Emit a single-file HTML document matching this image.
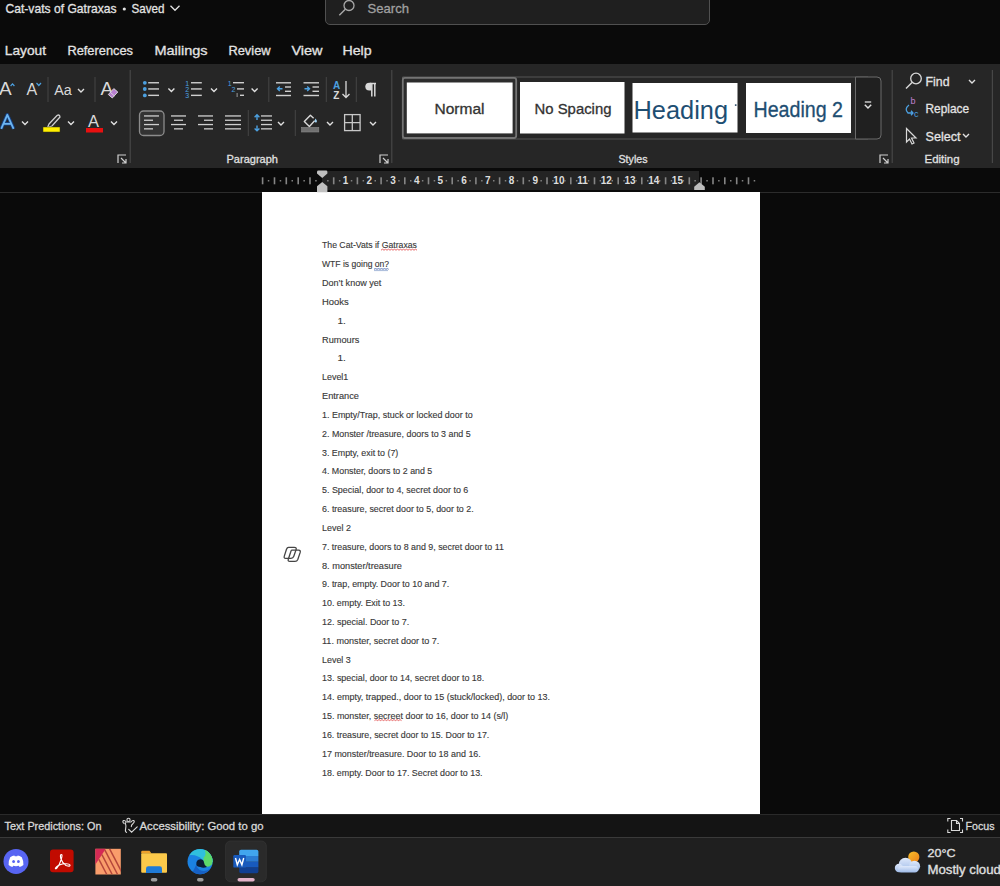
<!DOCTYPE html>
<html><head><meta charset="utf-8">
<style>
*{margin:0;padding:0;box-sizing:border-box}
html,body{width:1000px;height:886px;overflow:hidden;background:#0a0a0a;font-family:"Liberation Sans",sans-serif;position:relative}
#ribbon{position:absolute;left:0;top:64px;width:1000px;height:104px;background:#262626}
#ruler{position:absolute;left:322px;top:170.8px;width:377px;height:19.6px;background:#242424}
#page{position:absolute;left:262px;top:192.3px;width:497.6px;height:621.4px;background:#fff}
#status{position:absolute;left:0;top:813.5px;width:1000px;height:23.5px;background:#141414;border-top:1px solid #2a2a2a}
#task{position:absolute;left:0;top:837px;width:1000px;height:49px;background:#1f1f1f;border-top:1px solid #3a3a3a}
.ov{position:absolute;left:0;top:0}
</style></head><body>
<div id="search" style="position:absolute;left:325px;top:-5.4px;width:385px;height:30px;border:1px solid #505050;border-radius:5px;background:#1f1f1f"></div>
<div id="ribbon"></div>
<div id="ruler"></div>
<div style="position:absolute;left:0;top:191.5px;width:1000px;height:1px;background:#2c2c2c"></div>
<div id="page"></div>
<div id="status"></div>
<div id="task"></div>
<svg class="ov" width="1000" height="886" viewBox="0 0 1000 886" font-family="Liberation Sans, sans-serif">
<text x="-1" y="95" font-size="19" fill="#d9d9d9">A</text>
<path d="M10.6,86 L12.5,83.8 L14.4,86" fill="none" stroke="#4ca0e0" stroke-width="1.2"/>
<text x="26.5" y="95" font-size="16" fill="#d9d9d9">A</text>
<path d="M36.5,83 L38.8,85.5 L41,83" fill="none" stroke="#4ca0e0" stroke-width="1.2"/>
<rect x="47.5" y="77" width="1" height="25" fill="#454545"/>
<text x="54.3" y="95" font-size="15.5" fill="#d9d9d9" textLength="17.5" lengthAdjust="spacingAndGlyphs">Aa</text>
<path d="M78,88.9 L81,91.9 L84,88.9" fill="none" stroke="#e0e0e0" stroke-width="1.4"/>
<rect x="94.5" y="77" width="1" height="25" fill="#454545"/>
<text x="100.5" y="95" font-size="19" fill="#d9d9d9">A</text>
<path d="M108.3,94.5 L113.8,88.6 L117.8,92 L112.3,98 Z" fill="#b77fd0" stroke="#e0e0e0" stroke-width="0.9"/><path d="M110.3,92.3 L114.5,96" stroke="#e0e0e0" stroke-width="0.8"/>
<path d="M1.2,128.8 L7.3,114.8 L13.6,128.8 M3.6,123.8 L11.2,123.8" fill="none" stroke="#163f80" stroke-width="3.6" stroke-linejoin="round"/><path d="M1.2,128.8 L7.3,114.8 L13.6,128.8 M3.6,123.8 L11.2,123.8" fill="none" stroke="#6cb5f0" stroke-width="1.8" stroke-linejoin="round"/>
<path d="M22,121.4 L25,124.4 L28,121.4" fill="none" stroke="#e0e0e0" stroke-width="1.4"/>
<path d="M49,124 L57,115.5 Q59.5,114 60,117 L52,126 L47.5,127.5 Z" fill="none" stroke="#cfcfcf" stroke-width="1.3"/>
<rect x="43" y="127" width="17" height="5" fill="#ffef00" stroke="#3a3a10" stroke-width="0.5"/>
<path d="M68,121.4 L71,124.4 L74,121.4" fill="none" stroke="#e0e0e0" stroke-width="1.4"/>
<text x="88" y="127" font-size="16.5" fill="#d9d9d9">A</text>
<rect x="86" y="128" width="17" height="4.5" fill="#e81010"/>
<path d="M111,121.4 L114,124.4 L117,121.4" fill="none" stroke="#e0e0e0" stroke-width="1.4"/>
<path d="M118,163 L118,155 L126,155" fill="none" stroke="#d0d0d0" stroke-width="1.2"/><path d="M121,158 L126,163 M126,159 L126,163 L122,163" fill="none" stroke="#d0d0d0" stroke-width="1.2"/>
<circle cx="144.8" cy="82.8" r="1.9" fill="#4ca0e0"/>
<rect x="148.2" y="82.05" width="10.8" height="1.4" fill="#cfcfcf"/>
<circle cx="144.8" cy="89" r="1.9" fill="#4ca0e0"/>
<rect x="148.2" y="88.25" width="10.8" height="1.4" fill="#cfcfcf"/>
<circle cx="144.8" cy="95.4" r="1.9" fill="#4ca0e0"/>
<rect x="148.2" y="94.65" width="10.8" height="1.4" fill="#cfcfcf"/>
<path d="M168.4,88.4 L171.4,91.4 L174.4,88.4" fill="none" stroke="#e0e0e0" stroke-width="1.4"/>
<text x="185.3" y="85.6" font-size="7" fill="#4ca0e0">1</text>
<rect x="191" y="82.05" width="10.8" height="1.4" fill="#cfcfcf"/>
<text x="185.3" y="91.8" font-size="7" fill="#4ca0e0">2</text>
<rect x="191" y="88.25" width="10.8" height="1.4" fill="#cfcfcf"/>
<text x="185.3" y="98.2" font-size="7" fill="#4ca0e0">3</text>
<rect x="191" y="94.65" width="10.8" height="1.4" fill="#cfcfcf"/>
<path d="M211,88.4 L214,91.4 L217,88.4" fill="none" stroke="#e0e0e0" stroke-width="1.4"/>
<text x="227.8" y="85.5" font-size="7" fill="#4ca0e0">1</text>
<text x="231.5" y="91.8" font-size="7" fill="#4ca0e0">2</text>
<rect x="236.6" y="93" width="1" height="4" fill="#9a9a9a"/>
<rect x="233" y="82" width="11" height="1.4" fill="#cfcfcf"/>
<rect x="237" y="88.2" width="7" height="1.4" fill="#cfcfcf"/>
<rect x="240" y="94.6" width="4" height="1.4" fill="#cfcfcf"/>
<path d="M251.6,88.4 L254.6,91.4 L257.6,88.4" fill="none" stroke="#e0e0e0" stroke-width="1.4"/>
<rect x="268.3" y="77" width="1" height="25" fill="#454545"/>
<rect x="276" y="82.1" width="15" height="1.4" fill="#cfcfcf"/>
<rect x="285" y="86.3" width="6" height="1.4" fill="#cfcfcf"/>
<rect x="285" y="90.6" width="6" height="1.4" fill="#cfcfcf"/>
<rect x="276" y="94.8" width="15" height="1.4" fill="#cfcfcf"/>
<path d="M282.5,88.7 L277.5,88.7 M279.8,86.5 L277.5,88.7 L279.8,90.9" fill="none" stroke="#4ca0e0" stroke-width="1.4"/>
<rect x="303.5" y="82.1" width="15.5" height="1.4" fill="#cfcfcf"/>
<rect x="312.5" y="86.3" width="6.5" height="1.4" fill="#cfcfcf"/>
<rect x="312.5" y="90.6" width="6.5" height="1.4" fill="#cfcfcf"/>
<rect x="303.5" y="94.8" width="15.5" height="1.4" fill="#cfcfcf"/>
<path d="M304.5,88.7 L309.5,88.7 M307.2,86.5 L309.5,88.7 L307.2,90.9" fill="none" stroke="#4ca0e0" stroke-width="1.4"/>
<rect x="325.8" y="77" width="1" height="25" fill="#454545"/>
<text x="333" y="88.5" font-size="10" fill="#4ca0e0" font-weight="bold">A</text>
<text x="333.2" y="98.5" font-size="10" fill="#d9d9d9" font-weight="bold">Z</text>
<path d="M346,81 L346,97.5 M342.5,94 L346,97.5 L349.5,94" fill="none" stroke="#d9d9d9" stroke-width="1.3"/>
<rect x="355.8" y="77" width="1" height="25" fill="#454545"/>
<path d="M370.2,83.4 L376,83.4 M371.8,83.4 L371.8,96.4 M374.8,83.4 L374.8,96.4" fill="none" stroke="#d9d9d9" stroke-width="1.5"/>
<path d="M371.2,82.7 L369.3,82.7 A4,3.9 0 0 0 369.3,90.5 L371.2,90.5 Z" fill="#d9d9d9"/>
<rect x="139.5" y="111" width="24.5" height="24.5" rx="4" fill="#333333" stroke="#8c8c8c" stroke-width="1.3"/>
<rect x="144" y="115.3" width="15" height="1.3" fill="#cfcfcf"/>
<rect x="144" y="119.6" width="9" height="1.3" fill="#cfcfcf"/>
<rect x="144" y="123.89999999999999" width="15" height="1.3" fill="#cfcfcf"/>
<rect x="144" y="128.20000000000002" width="9" height="1.3" fill="#cfcfcf"/>
<rect x="171" y="115.3" width="15" height="1.3" fill="#cfcfcf"/>
<rect x="174" y="119.6" width="9" height="1.3" fill="#cfcfcf"/>
<rect x="171" y="123.89999999999999" width="15" height="1.3" fill="#cfcfcf"/>
<rect x="174" y="128.20000000000002" width="9" height="1.3" fill="#cfcfcf"/>
<rect x="198" y="115.3" width="15" height="1.3" fill="#cfcfcf"/>
<rect x="204" y="119.6" width="9" height="1.3" fill="#cfcfcf"/>
<rect x="198" y="123.89999999999999" width="15" height="1.3" fill="#cfcfcf"/>
<rect x="204" y="128.20000000000002" width="9" height="1.3" fill="#cfcfcf"/>
<rect x="225" y="115.3" width="16" height="1.3" fill="#cfcfcf"/>
<rect x="225" y="119.6" width="16" height="1.3" fill="#cfcfcf"/>
<rect x="225" y="123.89999999999999" width="16" height="1.3" fill="#cfcfcf"/>
<rect x="225" y="128.20000000000002" width="16" height="1.3" fill="#cfcfcf"/>
<rect x="247.8" y="110" width="1" height="26" fill="#454545"/>
<rect x="261" y="115.3" width="11" height="1.3" fill="#cfcfcf"/>
<rect x="261" y="119.6" width="11" height="1.3" fill="#cfcfcf"/>
<rect x="261" y="123.89999999999999" width="11" height="1.3" fill="#cfcfcf"/>
<rect x="261" y="128.20000000000002" width="11" height="1.3" fill="#cfcfcf"/>
<path d="M257,114.8 L257,120 M254.6,117.2 L257,114.8 L259.4,117.2 M257,125.5 L257,130.8 M254.6,128.4 L257,130.8 L259.4,128.4" fill="none" stroke="#4ca0e0" stroke-width="1.4"/>
<path d="M278,121.9 L281,124.9 L284,121.9" fill="none" stroke="#e0e0e0" stroke-width="1.4"/>
<rect x="294.8" y="110" width="1" height="26" fill="#454545"/>
<path d="M313.6,118.2 L310.4,115.2 L304.3,121.6 L309.4,126.4 L314.6,120.8" fill="none" stroke="#d9d9d9" stroke-width="1.4" stroke-linejoin="round"/>
<path d="M315.6,118.4 Q317.4,120.6 316.6,122.2 Q315.4,123.2 314.6,121.8 Q314.3,120.2 315.6,118.4 Z" fill="#9fd3f5"/>
<rect x="301.6" y="127.4" width="17.2" height="4.6" fill="#707070" stroke="#8a8a8a" stroke-width="0.6"/>
<path d="M327,121.9 L330,124.9 L333,121.9" fill="none" stroke="#e0e0e0" stroke-width="1.4"/>
<rect x="344.6" y="114.6" width="15.5" height="16" fill="none" stroke="#c8c8c8" stroke-width="1.3"/>
<path d="M352.3,114.6 L352.3,130.6 M344.6,122.6 L360.1,122.6" stroke="#c8c8c8" stroke-width="1.3"/>
<path d="M370,121.9 L373,124.9 L376,121.9" fill="none" stroke="#e0e0e0" stroke-width="1.4"/>
<path d="M380,163 L380,155 L388,155" fill="none" stroke="#d0d0d0" stroke-width="1.2"/><path d="M383,158 L388,163 M388,159 L388,163 L384,163" fill="none" stroke="#d0d0d0" stroke-width="1.2"/>
<rect x="129.6" y="70" width="1.2" height="93" fill="#474747"/>
<rect x="391.2" y="70" width="1.2" height="93" fill="#474747"/>
<rect x="891.6" y="70" width="1.2" height="93" fill="#474747"/>
<rect x="991.8" y="70" width="1.2" height="93" fill="#474747"/>
<path d="M402.5,77 L868,77 M402.5,77 L402.5,139 L868,139" fill="none" stroke="#555" stroke-width="1"/>
<path d="M855.5,77 L877,77 Q881,77 881,81 L881,135 Q881,139 877,139 L855.5,139 Z" fill="#202020" stroke="#6a6a6a" stroke-width="1"/>
<path d="M864.8,104.8 L868,108 L871.2,104.8" fill="none" stroke="#e0e0e0" stroke-width="1.5"/><path d="M864.8,102 L871.2,102" stroke="#e0e0e0" stroke-width="1.3"/>
<rect x="402.8" y="77.8" width="113.4" height="60.2" rx="2.2" fill="#2c2c2c" stroke="#747474" stroke-width="1.8"/>
<rect x="406.8" y="82.5" width="105.8" height="50.9" fill="#fff"/>
<rect x="520" y="82" width="104.5" height="51.5" fill="#fff"/>
<rect x="632.5" y="83" width="105" height="49.5" fill="#fff"/>
<rect x="746" y="83" width="105" height="50" fill="#fff"/>
<svg x="632.5" y="83" width="105" height="49.5" overflow="hidden"><text x="1" y="35.6" font-size="26.5" fill="#1e4e72" textLength="94.5" lengthAdjust="spacingAndGlyphs">Heading</text><rect x="102.4" y="21.3" width="1.6" height="1.6" fill="#2a4a66"/></svg>
<path d="M880,163 L880,155 L888,155" fill="none" stroke="#d0d0d0" stroke-width="1.2"/><path d="M883,158 L888,163 M888,159 L888,163 L884,163" fill="none" stroke="#d0d0d0" stroke-width="1.2"/>
<circle cx="916" cy="78.5" r="5.3" fill="none" stroke="#d9d9d9" stroke-width="1.3"/>
<path d="M912,82.5 L906,88.5" stroke="#d9d9d9" stroke-width="1.5"/>
<path d="M969,79.9 L972,82.9 L975,79.9" fill="none" stroke="#e0e0e0" stroke-width="1.4"/>
<text x="910.5" y="104" font-size="9" fill="#c080d0">b</text>
<text x="914" y="116.5" font-size="9" fill="#4ca0e0">c</text>
<path d="M909,105 Q904,109 908,113 L913,113 M911,110.8 L913,113 L911,115.2" fill="none" stroke="#4ca0e0" stroke-width="1.3"/>
<path d="M906.5,128.5 L906.5,142 L909.5,139 L912,144 L914,143 L911.5,138 L916,138 Z" fill="none" stroke="#d9d9d9" stroke-width="1.2"/>
<path d="M963,133.9 L966,136.9 L969,133.9" fill="none" stroke="#e0e0e0" stroke-width="1.4"/>
<text x="5.5" y="13.3" font-size="13" fill="#e3e3e3" stroke="#e3e3e3" stroke-width="0.3" textLength="111" lengthAdjust="spacingAndGlyphs" >Cat-vats of Gatraxas</text>
<text x="131.5" y="13.3" font-size="13" fill="#e3e3e3" stroke="#e3e3e3" stroke-width="0.3" textLength="33" lengthAdjust="spacingAndGlyphs" >Saved</text>
<text x="367.5" y="13.2" font-size="13.2" fill="#a0a0a0" stroke="#a0a0a0" stroke-width="0.3" textLength="41.5" lengthAdjust="spacingAndGlyphs" >Search</text>
<text x="4.800000000000001" y="55.2" font-size="13.4" fill="#e3e3e3" stroke="#e3e3e3" stroke-width="0.3" textLength="41.2" lengthAdjust="spacingAndGlyphs" >Layout</text>
<text x="67.4" y="55.2" font-size="13.4" fill="#e3e3e3" stroke="#e3e3e3" stroke-width="0.3" textLength="65.6" lengthAdjust="spacingAndGlyphs" >References</text>
<text x="154.4" y="55.2" font-size="13.4" fill="#e3e3e3" stroke="#e3e3e3" stroke-width="0.3" textLength="53.2" lengthAdjust="spacingAndGlyphs" >Mailings</text>
<text x="228.4" y="55.2" font-size="13.4" fill="#e3e3e3" stroke="#e3e3e3" stroke-width="0.3" textLength="42.2" lengthAdjust="spacingAndGlyphs" >Review</text>
<text x="291.4" y="55.2" font-size="13.4" fill="#e3e3e3" stroke="#e3e3e3" stroke-width="0.3" textLength="31.2" lengthAdjust="spacingAndGlyphs" >View</text>
<text x="342.4" y="55.2" font-size="13.4" fill="#e3e3e3" stroke="#e3e3e3" stroke-width="0.3" textLength="29.2" lengthAdjust="spacingAndGlyphs" >Help</text>
<text x="226.5" y="162.7" font-size="11.2" fill="#e0e0e0" stroke="#e0e0e0" stroke-width="0.3" textLength="51.5" lengthAdjust="spacingAndGlyphs" >Paragraph</text>
<text x="618.5" y="162.5" font-size="11.2" fill="#e0e0e0" stroke="#e0e0e0" stroke-width="0.3" textLength="29" lengthAdjust="spacingAndGlyphs" >Styles</text>
<text x="924.5" y="162.6" font-size="11.6" fill="#e0e0e0" stroke="#e0e0e0" stroke-width="0.3" textLength="35" lengthAdjust="spacingAndGlyphs" >Editing</text>
<text x="925.5" y="86.2" font-size="13" fill="#e3e3e3" stroke="#e3e3e3" stroke-width="0.3" textLength="24" lengthAdjust="spacingAndGlyphs" >Find</text>
<text x="925.5" y="113.2" font-size="13" fill="#e3e3e3" stroke="#e3e3e3" stroke-width="0.3" textLength="43.5" lengthAdjust="spacingAndGlyphs" >Replace</text>
<text x="925.5" y="140.8" font-size="13" fill="#e3e3e3" stroke="#e3e3e3" stroke-width="0.3" textLength="35" lengthAdjust="spacingAndGlyphs" >Select</text>
<text x="434.5" y="113.5" font-size="14" fill="#333" stroke="#333" stroke-width="0.3" textLength="50" lengthAdjust="spacingAndGlyphs" >Normal</text>
<text x="534.5" y="113.5" font-size="14" fill="#333" stroke="#333" stroke-width="0.3" textLength="77" lengthAdjust="spacingAndGlyphs" >No Spacing</text>
<text x="753.5" y="116.7" font-size="22" fill="#1e4e72" stroke="#1e4e72" stroke-width="0.3" textLength="89.5" lengthAdjust="spacingAndGlyphs" >Heading 2</text>
<text x="4.5" y="829.7" font-size="11.2" fill="#d8d8d8" stroke="#d8d8d8" stroke-width="0.3" textLength="97" lengthAdjust="spacingAndGlyphs" >Text Predictions: On</text>
<text x="139.5" y="829.7" font-size="11.2" fill="#d8d8d8" stroke="#d8d8d8" stroke-width="0.3" textLength="124" lengthAdjust="spacingAndGlyphs" >Accessibility: Good to go</text>
<text x="965.5" y="829.8" font-size="11.2" fill="#d8d8d8" stroke="#d8d8d8" stroke-width="0.3" textLength="29" lengthAdjust="spacingAndGlyphs" >Focus</text>
<text x="927.5" y="857.4" font-size="11.8" fill="#e0e0e0" stroke="#e0e0e0" stroke-width="0.3" textLength="28" lengthAdjust="spacingAndGlyphs" >20°C</text>
<text x="927.5" y="874.2" font-size="12.2" fill="#e0e0e0" stroke="#e0e0e0" stroke-width="0.3" textLength="80" lengthAdjust="spacingAndGlyphs" >Mostly cloudy</text>
<circle cx="124.3" cy="9" r="1.6" fill="#e3e3e3"/>
<path d="M170.5,5.8 L175,10.3 L179.5,5.8" fill="none" stroke="#e3e3e3" stroke-width="1.3"/>
<circle cx="349" cy="5.5" r="5" fill="none" stroke="#a8a8a8" stroke-width="1.3"/>
<path d="M345.3,9.2 L339.3,15.2" stroke="#a8a8a8" stroke-width="1.4"/>
<rect x="261.8" y="177.3" width="1.6" height="7" fill="#858585"/>
<rect x="267.8" y="180" width="1.5" height="1.5" fill="#808080"/>
<rect x="273.7" y="177.3" width="1.6" height="7" fill="#858585"/>
<rect x="279.7" y="180" width="1.5" height="1.5" fill="#808080"/>
<rect x="285.5" y="177.3" width="1.6" height="7" fill="#858585"/>
<rect x="291.5" y="180" width="1.5" height="1.5" fill="#808080"/>
<rect x="297.4" y="177.3" width="1.6" height="7" fill="#858585"/>
<rect x="303.4" y="180" width="1.5" height="1.5" fill="#808080"/>
<rect x="309.2" y="177.3" width="1.6" height="7" fill="#858585"/>
<rect x="315.2" y="180" width="1.5" height="1.5" fill="#808080"/>
<rect x="327.1" y="180" width="1.5" height="1.5" fill="#808080"/>
<rect x="332.9" y="177.3" width="1.6" height="7" fill="#858585"/>
<rect x="338.9" y="180" width="1.5" height="1.5" fill="#808080"/>
<text x="345.6" y="184.3" font-size="10" fill="#dedede" text-anchor="middle" font-weight="bold">1</text>
<rect x="350.8" y="180" width="1.5" height="1.5" fill="#808080"/>
<rect x="356.6" y="177.3" width="1.6" height="7" fill="#858585"/>
<rect x="362.6" y="180" width="1.5" height="1.5" fill="#808080"/>
<text x="369.3" y="184.3" font-size="10" fill="#dedede" text-anchor="middle" font-weight="bold">2</text>
<rect x="374.5" y="180" width="1.5" height="1.5" fill="#808080"/>
<rect x="380.3" y="177.3" width="1.6" height="7" fill="#858585"/>
<rect x="386.3" y="180" width="1.5" height="1.5" fill="#808080"/>
<text x="393.0" y="184.3" font-size="10" fill="#dedede" text-anchor="middle" font-weight="bold">3</text>
<rect x="398.2" y="180" width="1.5" height="1.5" fill="#808080"/>
<rect x="404.0" y="177.3" width="1.6" height="7" fill="#858585"/>
<rect x="410.0" y="180" width="1.5" height="1.5" fill="#808080"/>
<text x="416.7" y="184.3" font-size="10" fill="#dedede" text-anchor="middle" font-weight="bold">4</text>
<rect x="421.9" y="180" width="1.5" height="1.5" fill="#808080"/>
<rect x="427.7" y="177.3" width="1.6" height="7" fill="#858585"/>
<rect x="433.7" y="180" width="1.5" height="1.5" fill="#808080"/>
<text x="440.4" y="184.3" font-size="10" fill="#dedede" text-anchor="middle" font-weight="bold">5</text>
<rect x="445.6" y="180" width="1.5" height="1.5" fill="#808080"/>
<rect x="451.4" y="177.3" width="1.6" height="7" fill="#858585"/>
<rect x="457.4" y="180" width="1.5" height="1.5" fill="#808080"/>
<text x="464.1" y="184.3" font-size="10" fill="#dedede" text-anchor="middle" font-weight="bold">6</text>
<rect x="469.3" y="180" width="1.5" height="1.5" fill="#808080"/>
<rect x="475.1" y="177.3" width="1.6" height="7" fill="#858585"/>
<rect x="481.1" y="180" width="1.5" height="1.5" fill="#808080"/>
<text x="487.8" y="184.3" font-size="10" fill="#dedede" text-anchor="middle" font-weight="bold">7</text>
<rect x="493.0" y="180" width="1.5" height="1.5" fill="#808080"/>
<rect x="498.8" y="177.3" width="1.6" height="7" fill="#858585"/>
<rect x="504.8" y="180" width="1.5" height="1.5" fill="#808080"/>
<text x="511.5" y="184.3" font-size="10" fill="#dedede" text-anchor="middle" font-weight="bold">8</text>
<rect x="516.7" y="180" width="1.5" height="1.5" fill="#808080"/>
<rect x="522.5" y="177.3" width="1.6" height="7" fill="#858585"/>
<rect x="528.5" y="180" width="1.5" height="1.5" fill="#808080"/>
<text x="535.2" y="184.3" font-size="10" fill="#dedede" text-anchor="middle" font-weight="bold">9</text>
<rect x="540.4" y="180" width="1.5" height="1.5" fill="#808080"/>
<rect x="546.2" y="177.3" width="1.6" height="7" fill="#858585"/>
<rect x="552.2" y="180" width="1.5" height="1.5" fill="#808080"/>
<text x="558.9" y="184.3" font-size="10" fill="#dedede" text-anchor="middle" font-weight="bold">10</text>
<rect x="564.1" y="180" width="1.5" height="1.5" fill="#808080"/>
<rect x="570.0" y="177.3" width="1.6" height="7" fill="#858585"/>
<rect x="575.9" y="180" width="1.5" height="1.5" fill="#808080"/>
<text x="582.6" y="184.3" font-size="10" fill="#dedede" text-anchor="middle" font-weight="bold">11</text>
<rect x="587.8" y="180" width="1.5" height="1.5" fill="#808080"/>
<rect x="593.7" y="177.3" width="1.6" height="7" fill="#858585"/>
<rect x="599.6" y="180" width="1.5" height="1.5" fill="#808080"/>
<text x="606.3" y="184.3" font-size="10" fill="#dedede" text-anchor="middle" font-weight="bold">12</text>
<rect x="611.5" y="180" width="1.5" height="1.5" fill="#808080"/>
<rect x="617.4" y="177.3" width="1.6" height="7" fill="#858585"/>
<rect x="623.3" y="180" width="1.5" height="1.5" fill="#808080"/>
<text x="630.0" y="184.3" font-size="10" fill="#dedede" text-anchor="middle" font-weight="bold">13</text>
<rect x="635.2" y="180" width="1.5" height="1.5" fill="#808080"/>
<rect x="641.0" y="177.3" width="1.6" height="7" fill="#858585"/>
<rect x="647.0" y="180" width="1.5" height="1.5" fill="#808080"/>
<text x="653.7" y="184.3" font-size="10" fill="#dedede" text-anchor="middle" font-weight="bold">14</text>
<rect x="658.9" y="180" width="1.5" height="1.5" fill="#808080"/>
<rect x="664.8" y="177.3" width="1.6" height="7" fill="#858585"/>
<rect x="670.7" y="180" width="1.5" height="1.5" fill="#808080"/>
<text x="677.4" y="184.3" font-size="10" fill="#dedede" text-anchor="middle" font-weight="bold">15</text>
<rect x="682.6" y="180" width="1.5" height="1.5" fill="#808080"/>
<rect x="688.5" y="177.3" width="1.6" height="7" fill="#858585"/>
<rect x="694.4" y="180" width="1.5" height="1.5" fill="#808080"/>
<rect x="700.3" y="177.3" width="1.6" height="7" fill="#858585"/>
<rect x="706.3" y="180" width="1.5" height="1.5" fill="#808080"/>
<rect x="712.2" y="177.3" width="1.6" height="7" fill="#858585"/>
<rect x="718.1" y="180" width="1.5" height="1.5" fill="#808080"/>
<rect x="724.0" y="177.3" width="1.6" height="7" fill="#858585"/>
<rect x="730.0" y="180" width="1.5" height="1.5" fill="#808080"/>
<rect x="735.9" y="177.3" width="1.6" height="7" fill="#858585"/>
<rect x="741.8" y="180" width="1.5" height="1.5" fill="#808080"/>
<rect x="747.7" y="177.3" width="1.6" height="7" fill="#858585"/>
<rect x="753.7" y="180" width="1.5" height="1.5" fill="#808080"/>
<path d="M318.5,170.6 L326,170.6 Q327.4,170.6 327.4,172 L327.4,173.6 L322.2,177.9 L317,173.6 L317,172 Q317,170.6 318.5,170.6 Z" fill="#c0c0c0"/>
<path d="M322.2,182 L327.4,186.2 L327.4,192.2 L317,192.2 L317,186.2 Z" fill="#c0c0c0"/>
<path d="M699.5,182.3 L704.8,186.8 L704.8,190 L694.2,190 L694.2,186.8 Z" fill="#bdbdbd"/>
<g fill="none" stroke="#454545" stroke-width="1.3"><path d="M288.5,547.3 L294.3,547.3 Q296.8,547.3 296.1,549.6 L293.8,556.3 Q293.1,558.3 291,558.3 L285.6,558.3 Q283.6,558.3 284.3,556.1 L286.5,549.3 Q287.2,547.3 288.5,547.3 Z"/><path d="M291.8,550.2 L298.6,550.2 Q300.8,550.2 300.2,552.4 L297.8,559.4 Q297,561.3 295,561.3 L289.8,561.3 Q287.6,561.3 288.3,559.2 L290.6,552.2 Q291.2,550.2 291.8,550.2 Z"/></g>
<text x="322.0" y="248.3" font-size="8.2" fill="#383838" stroke="#383838" stroke-width="0.12" textLength="94.9" lengthAdjust="spacingAndGlyphs">The Cat-Vats if Gatraxas</text>
<text x="322.0" y="267.2" font-size="8.2" fill="#383838" stroke="#383838" stroke-width="0.12" textLength="67.1" lengthAdjust="spacingAndGlyphs">WTF is going on?</text>
<text x="322.0" y="286.0" font-size="8.2" fill="#383838" stroke="#383838" stroke-width="0.12" textLength="59.3" lengthAdjust="spacingAndGlyphs">Don’t know yet</text>
<text x="322.0" y="304.8" font-size="8.2" fill="#383838" stroke="#383838" stroke-width="0.12" textLength="26.7" lengthAdjust="spacingAndGlyphs">Hooks</text>
<text x="337.5" y="323.7" font-size="8.2" fill="#383838" stroke="#383838" stroke-width="0.12" textLength="8.4" lengthAdjust="spacingAndGlyphs">1.</text>
<text x="322.0" y="342.5" font-size="8.2" fill="#383838" stroke="#383838" stroke-width="0.12" textLength="37.3" lengthAdjust="spacingAndGlyphs">Rumours</text>
<text x="337.5" y="361.3" font-size="8.2" fill="#383838" stroke="#383838" stroke-width="0.12" textLength="8.4" lengthAdjust="spacingAndGlyphs">1.</text>
<text x="322.0" y="380.2" font-size="8.2" fill="#383838" stroke="#383838" stroke-width="0.12" textLength="26.3" lengthAdjust="spacingAndGlyphs">Level1</text>
<text x="322.0" y="399.0" font-size="8.2" fill="#383838" stroke="#383838" stroke-width="0.12" textLength="36.9" lengthAdjust="spacingAndGlyphs">Entrance</text>
<text x="322.0" y="417.8" font-size="8.2" fill="#383838" stroke="#383838" stroke-width="0.12" textLength="150.7" lengthAdjust="spacingAndGlyphs">1. Empty/Trap, stuck or locked door to</text>
<text x="322.0" y="436.6" font-size="8.2" fill="#383838" stroke="#383838" stroke-width="0.12" textLength="148.7" lengthAdjust="spacingAndGlyphs">2. Monster /treasure, doors to 3 and 5</text>
<text x="322.0" y="455.5" font-size="8.2" fill="#383838" stroke="#383838" stroke-width="0.12" textLength="76.3" lengthAdjust="spacingAndGlyphs">3. Empty, exit to (7)</text>
<text x="322.0" y="474.3" font-size="8.2" fill="#383838" stroke="#383838" stroke-width="0.12" textLength="110.3" lengthAdjust="spacingAndGlyphs">4. Monster, doors to 2 and 5</text>
<text x="322.0" y="493.1" font-size="8.2" fill="#383838" stroke="#383838" stroke-width="0.12" textLength="146.3" lengthAdjust="spacingAndGlyphs">5. Special, door to 4, secret door to 6</text>
<text x="322.0" y="512.0" font-size="8.2" fill="#383838" stroke="#383838" stroke-width="0.12" textLength="151.7" lengthAdjust="spacingAndGlyphs">6. treasure, secret door to 5, door to 2.</text>
<text x="322.0" y="530.8" font-size="8.2" fill="#383838" stroke="#383838" stroke-width="0.12" textLength="28.9" lengthAdjust="spacingAndGlyphs">Level 2</text>
<text x="322.0" y="549.6" font-size="8.2" fill="#383838" stroke="#383838" stroke-width="0.12" textLength="181.9" lengthAdjust="spacingAndGlyphs">7. treasure, doors to 8 and 9, secret door to 11</text>
<text x="322.0" y="568.5" font-size="8.2" fill="#383838" stroke="#383838" stroke-width="0.12" textLength="79.9" lengthAdjust="spacingAndGlyphs">8. monster/treasure</text>
<text x="322.0" y="587.3" font-size="8.2" fill="#383838" stroke="#383838" stroke-width="0.12" textLength="127.3" lengthAdjust="spacingAndGlyphs">9. trap, empty. Door to 10 and 7.</text>
<text x="322.0" y="606.1" font-size="8.2" fill="#383838" stroke="#383838" stroke-width="0.12" textLength="83.0" lengthAdjust="spacingAndGlyphs">10. empty. Exit to 13.</text>
<text x="322.0" y="624.9" font-size="8.2" fill="#383838" stroke="#383838" stroke-width="0.12" textLength="87.3" lengthAdjust="spacingAndGlyphs">12. special. Door to 7.</text>
<text x="322.0" y="643.8" font-size="8.2" fill="#383838" stroke="#383838" stroke-width="0.12" textLength="117.3" lengthAdjust="spacingAndGlyphs">11. monster, secret door to 7.</text>
<text x="322.0" y="662.6" font-size="8.2" fill="#383838" stroke="#383838" stroke-width="0.12" textLength="28.8" lengthAdjust="spacingAndGlyphs">Level 3</text>
<text x="322.0" y="681.4" font-size="8.2" fill="#383838" stroke="#383838" stroke-width="0.12" textLength="162.3" lengthAdjust="spacingAndGlyphs">13. special, door to 14, secret door to 18.</text>
<text x="322.0" y="700.3" font-size="8.2" fill="#383838" stroke="#383838" stroke-width="0.12" textLength="228.1" lengthAdjust="spacingAndGlyphs">14. empty, trapped., door to 15 (stuck/locked), door to 13.</text>
<text x="322.0" y="719.1" font-size="8.2" fill="#383838" stroke="#383838" stroke-width="0.12" textLength="186.3" lengthAdjust="spacingAndGlyphs">15. monster, secreet door to 16, door to 14 (s/l)</text>
<text x="322.0" y="737.9" font-size="8.2" fill="#383838" stroke="#383838" stroke-width="0.12" textLength="167.3" lengthAdjust="spacingAndGlyphs">16. treasure, secret door to 15. Door to 17.</text>
<text x="322.0" y="756.8" font-size="8.2" fill="#383838" stroke="#383838" stroke-width="0.12" textLength="158.8" lengthAdjust="spacingAndGlyphs">17 monster/treasure. Door to 18 and 16.</text>
<text x="322.0" y="775.6" font-size="8.2" fill="#383838" stroke="#383838" stroke-width="0.12" textLength="160.6" lengthAdjust="spacingAndGlyphs">18. empty. Door to 17. Secret door to 13.</text>
<path d="M381,250.2 L382.5,249.2 L384.0,250.2 L385.5,249.2 L387.0,250.2 L388.5,249.2 L390.0,250.2 L391.5,249.2 L393.0,250.2 L394.5,249.2 L396.0,250.2 L397.5,249.2 L399.0,250.2 L400.5,249.2 L402.0,250.2 L403.5,249.2 L405.0,250.2 L406.5,249.2 L408.0,250.2 L409.5,249.2 L411.0,250.2 L412.5,249.2 L414.0,250.2 L415.5,249.2 L417.0,250.2" fill="none" stroke="#e04040" stroke-width="0.8"/>
<path d="M374,269.5 L375.5,268.5 L377.0,269.5 L378.5,268.5 L380.0,269.5 L381.5,268.5 L383.0,269.5 L384.5,268.5 L386.0,269.5 L387.5,268.5 L389.0,269.5" fill="none" stroke="#8090c0" stroke-width="0.8"/>
<path d="M374,268.8 L388,268.8 M374,270.6 L388,270.6" stroke="#6a8ac0" stroke-width="0.6"/>
<path d="M374.5,720.6 L376.0,719.6 L377.5,720.6 L379.0,719.6 L380.5,720.6 L382.0,719.6 L383.5,720.6 L385.0,719.6 L386.5,720.6 L388.0,719.6 L389.5,720.6 L391.0,719.6 L392.5,720.6 L394.0,719.6 L395.5,720.6 L397.0,719.6 L398.5,720.6 L400.0,719.6 L401.5,720.6" fill="none" stroke="#e04040" stroke-width="0.8"/>
<circle cx="16" cy="861.4" r="12.5" fill="#5865f2"/>
<path d="M10.2,857.2 Q12.5,855.6 14.3,855.4 L14.8,856.3 Q16,856.1 17.2,856.3 L17.7,855.4 Q19.5,855.6 21.8,857.2 Q23.6,860.6 23.4,865 Q21.6,866.6 19.6,867 L18.8,865.8 Q16,866.6 13.2,865.8 L12.4,867 Q10.4,866.6 8.6,865 Q8.4,860.6 10.2,857.2 Z" fill="#fff"/>
<ellipse cx="13.6" cy="861.6" rx="1.4" ry="1.5" fill="#5865f2"/><ellipse cx="18.4" cy="861.6" rx="1.4" ry="1.5" fill="#5865f2"/>
<rect x="50" y="849.6" width="23.6" height="22.6" rx="3" fill="#c10b00"/>
<path d="M61.4,854.5 Q59.8,854.5 60.8,858.5 Q62,862.5 66,865.5 Q70.5,867 70,865 Q69,863 62.5,864 Q57,865.5 55.5,868 Q55,869.5 57,868 Q59.5,865 61,860 Q62.8,854.5 61.4,854.5 Z" fill="none" stroke="#fff" stroke-width="1.1"/>
<defs><clipPath id="afc"><rect x="95.4" y="848.8" width="25.4" height="25.7"/></clipPath></defs>
<rect x="95.4" y="848.8" width="25.4" height="25.7" fill="#f99d6b"/>
<path d="M95.4,848.8 L105.8,848.8 L95.4,864.5 Z" fill="#d42a55"/>
<g clip-path="url(#afc)" stroke="#b5463a" stroke-width="1.45">
<path d="M98.9,859.3 L106.8,874.5"/>
<path d="M101.9,854.7 L112.2,874.5"/>
<path d="M104.9,850.1 L117.6,874.5"/>
<path d="M109.6,848.8 L123.0,874.5"/>
</g>
<path d="M141.2,852 Q141.2,850.8 142.4,850.8 L149.5,850.8 L151.5,853.5 L141.2,853.5 Z" fill="#eea12c"/>
<rect x="141.2" y="853.3" width="25.8" height="19.5" rx="1" fill="#fcc94a"/>
<path d="M146,873 L146,868.5 Q146,866.2 148.3,866.2 L159.7,866.2 Q162,866.2 162,868.5 L162,873 Z" fill="#1f7ad6"/>
<rect x="150.8" y="878" width="6.6" height="3.4" rx="1.7" fill="#9d9d9d"/>
<defs><clipPath id="edc"><circle cx="200.1" cy="861.6" r="12.6"/></clipPath></defs>
<g clip-path="url(#edc)">
<rect x="187" y="848" width="27" height="28" fill="#1b82e2"/>
<path d="M187,855.5 Q193,854.2 198,856.5 Q202.5,858.5 203.8,862 L214,862 L214,848 L187,848 Z" fill="#30bfdd"/>
<path d="M204.5,849 Q213.5,853 213,861 Q212.5,866.8 206.5,866.8 Q203.3,866.5 202.8,863.5 Q204,860 203.5,857.5 Q207,855 204.5,849 Z" fill="#5dd96b"/>
<path d="M196.3,864.5 Q197,869.5 202,870.8 Q207,871.5 210.5,868.5 L214,876 L190,876 Q194,870 196.3,864.5 Z" fill="#1660c4"/>
<path d="M196.3,864.5 Q196,859.8 200.3,859.3 Q203.6,859.3 204,862.5 Q204.3,865.8 207,867 Q203,868.3 200.5,867 Q196.6,866.8 196.3,864.5 Z" fill="#0c1e36"/>
</g>
<rect x="197" y="878" width="6.6" height="3.4" rx="1.7" fill="#9d9d9d"/>
<rect x="225.6" y="841" width="40.7" height="40.8" rx="5" fill="#2a2a2a" stroke="#333" stroke-width="0.8"/>
<path d="M239.2,851.5 Q239.2,849.8 241,849.8 L256.6,849.8 Q258.4,849.8 258.4,851.5 L258.4,856 L239.2,856 Z" fill="#41a5ee"/>
<rect x="239.2" y="856" width="19.2" height="5.8" fill="#2b7cd3"/>
<rect x="239.2" y="861.8" width="19.2" height="5.8" fill="#185abd"/>
<path d="M239.2,867.6 L258.4,867.6 L258.4,871.5 Q258.4,873.3 256.6,873.3 L241,873.3 Q239.2,873.3 239.2,871.5 Z" fill="#103f91"/>
<rect x="233.3" y="855" width="12.7" height="12.6" rx="1.2" fill="#185abd"/>
<path d="M235.5,858 L237.3,864.8 L239.6,859.5 L241.9,864.8 L243.7,858" fill="none" stroke="#fff" stroke-width="1.4"/>
<rect x="237.5" y="878" width="17.2" height="3.5" rx="1.75" fill="#e4b3c9"/>
<defs><linearGradient id="sung" x1="0" y1="0" x2="1" y2="1"><stop offset="0" stop-color="#f9c02a"/><stop offset="1" stop-color="#ee7f1a"/></linearGradient><linearGradient id="cldg" x1="0" y1="0" x2="0" y2="1"><stop offset="0" stop-color="#dfe9fb"/><stop offset="1" stop-color="#9fbbe8"/></linearGradient></defs>
<circle cx="913.8" cy="857" r="5.6" fill="url(#sung)"/>
<g fill="url(#cldg)"><circle cx="905.5" cy="864.5" r="6.8"/><circle cx="914.5" cy="866.3" r="5.6"/><circle cx="899" cy="868" r="4.2"/><rect x="898" y="866" width="20" height="6.5" rx="3"/></g>
<g fill="none" stroke="#d8d8d8" stroke-width="1.1" stroke-linecap="round"><circle cx="128.5" cy="819.9" r="1.6"/><path d="M124.2,823.6 Q121.8,821.6 123.6,820.6 Q125,820.2 126.2,822 L131,822 Q132.2,820.2 133.6,820.6 Q135.4,821.6 132.6,824 Q131.3,825 131.3,826.6"/><path d="M125.3,822.6 Q126.4,826 125.6,829 Q124.9,831.8 126.6,832.4"/><path d="M128.7,829.4 L131.6,832.2 L137.2,826.8"/></g>
<g fill="none" stroke="#d8d8d8" stroke-width="1.1"><path d="M947.8,821.5 L947.8,818.5 L950.5,818.5 M960,818.5 L962.5,818.5 L962.5,821.5 M947.8,829.5 L947.8,832.5 L950.5,832.5 M960,832.5 L962.5,832.5 L962.5,829.5"/><path d="M951.5,820.5 L956.5,820.5 L959.5,823.5 L959.5,830.5 L951.5,830.5 Z M956.5,820.5 L956.5,823.5 L959.5,823.5"/></g>
</svg>
</body></html>
